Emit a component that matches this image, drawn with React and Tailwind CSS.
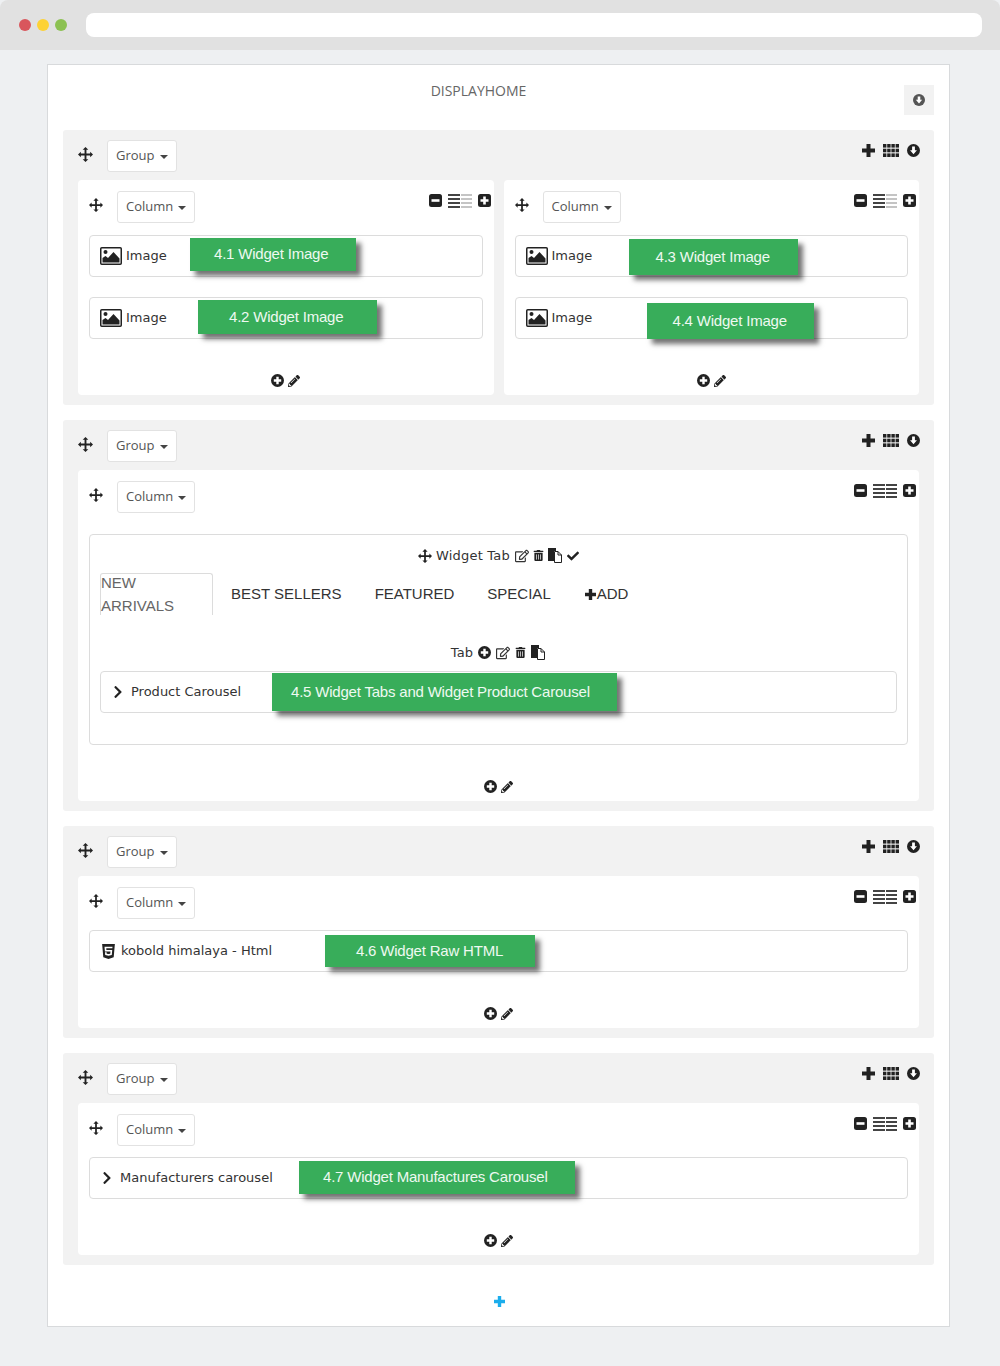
import React from "react";
import { FaPencilAlt, FaRegEdit, FaCheck, FaChevronRight, FaHtml5, FaTrashAlt } from "react-icons/fa";

const Move = ({ s = 16 }) => (
  <svg width={s} height={s} viewBox="0 0 16 16" fill="#222" className="shrink-0">
    <path d="M8 0 11 3H9V7H13V5L16 8 13 11V9H9V13H11L8 16 5 13H7V9H3V11L0 8 3 5V7H7V3H5Z" />
  </svg>
);
const Plus = ({ s = 13, c = "#222" }) => (
  <svg width={s} height={s} viewBox="0 0 13 13" fill={c} className="shrink-0">
    <path d="M4.5 0h4v4.5H13v4H8.5V13h-4V8.5H0v-4h4.500z" />
  </svg>
);
const Grid = () => (
  <svg width="16" height="13" viewBox="0 0 16 13" fill="#222" className="shrink-0">
    {[0, 4.7, 9.4].map((y) =>
      [0, 4.2, 8.4, 12.6].map((x) => <rect key={`${x}-${y}`} x={x} y={y} width="3.4" height="3.6" />)
    )}
  </svg>
);
const CircleDown = ({ s = 13, c = "#222" }) => (
  <svg width={s} height={s} viewBox="0 0 14 14" className="shrink-0">
    <circle cx="7" cy="7" r="7" fill={c} />
    <path d="M5.500 2.800h3v4h2.200L7 11 3.300 6.800h2.200z" fill="#fff" />
  </svg>
);
const SquareMinus = () => (
  <svg width="13" height="13" viewBox="0 0 13 13" className="shrink-0">
    <rect width="13" height="13" rx="2.500" fill="#222" />
    <rect x="2.500" y="5.200" width="8" height="2.600" fill="#fff" />
  </svg>
);
const SquarePlus = () => (
  <svg width="13" height="13" viewBox="0 0 13 13" className="shrink-0">
    <rect width="13" height="13" rx="2.500" fill="#222" />
    <path d="M5.200 2.500h2.600v2.700h2.700v2.600H7.800v2.700H5.200V7.800H2.500V5.200h2.700z" fill="#fff" />
  </svg>
);
const CirclePlus = () => (
  <svg width="13" height="13" viewBox="0 0 13 13" className="shrink-0">
    <circle cx="6.500" cy="6.500" r="6.500" fill="#222" />
    <path d="M5.300 2.800h2.400v2.500h2.500v2.400H7.700v2.500H5.300V7.700H2.800V5.300h2.500z" fill="#fff" />
  </svg>
);
const Copy = () => (
  <svg width="14" height="15" viewBox="0 0 14 15" className="shrink-0">
    <path d="M0 0h8v3H6v10H0z" fill="#222" />
    <path d="M6.500 3.500H10L13.500 7v7.500h-7z" fill="#fff" stroke="#222" />
    <path d="M10 3.500V7h3.500" fill="none" stroke="#222" />
  </svg>
);
const ImageIcon = () => (
  <svg width="22" height="18" viewBox="0 0 22 18" className="shrink-0">
    <rect x="0.750" y="0.750" width="20.500" height="16.500" rx="1" fill="#fff" stroke="#222" strokeWidth="1.500" />
    <circle cx="5.500" cy="5" r="2" fill="#222" />
    <path d="M2.500 15.500V11l3-2 2.500 2 5.500-6 6 6.500v4z" fill="#222" />
  </svg>
);
const Bars = ({ half }) => (
  <div className="flex gap-px">
    <div className="flex flex-col gap-[2px] w-[12px]">
      <div className="h-[2px] bg-[#444]" />
      <div className="h-[2px] bg-[#444]" />
      <div className="h-[2px] bg-[#444]" />
      <div className="h-[2px] bg-[#444]" />
    </div>
    <div className="flex flex-col gap-[2px] w-[11px]">
      <div className={half ? "h-[2px] bg-[#c4c4c4]" : "h-[2px] bg-[#444]"} />
      <div className={half ? "h-[2px] bg-[#c4c4c4]" : "h-[2px] bg-[#444]"} />
      <div className={half ? "h-[2px] bg-[#c4c4c4]" : "h-[2px] bg-[#444]"} />
      <div className={half ? "h-[2px] bg-[#c4c4c4]" : "h-[2px] bg-[#444]"} />
    </div>
  </div>
);

const Dropdown = ({ label }) => (
  <div className="flex items-center gap-[5px] h-[32px] px-[8px] bg-white border border-[#e2e2e2] rounded-[3px] text-[13px] text-[#555] shrink-0">
    <span>{label}</span>
    <span className="w-0 h-0 mt-[2px] border-x-[4px] border-x-transparent border-t-[4px] border-t-[#444]" />
  </div>
);

const Note = ({ className, children }) => (
  <div
    className={`absolute z-10 flex items-center bg-[#38ad5a] text-[#eef9f1] text-[15px] tracking-[-0.2px] font-['Liberation_Sans',sans-serif] shadow-[5px_5px_5px_rgba(0,0,0,0.55)] whitespace-nowrap ${className}`}
  >
    {children}
  </div>
);

const Row = ({ icon, text, children, className = "" }) => (
  <div className={`relative flex items-center h-[42px] bg-white border border-[#dcdcdc] rounded-[4px] text-[13px] text-[#333] font-['DejaVu_Sans',sans-serif] ${className}`}>
    {icon}
    <span>{text}</span>
    {children}
  </div>
);

const ColFoot = () => (
  <div className="flex items-center justify-center gap-[4px]">
    <CirclePlus />
    <FaPencilAlt size={12} color="#222" />
  </div>
);

const Column = ({ half, flex, headMb = "mb-[11px]", foot = "mt-[35px]", children }) => (
  <div className={`bg-white rounded-[4px] pt-[11px] px-[11px] pb-[8px] ${flex ? "flex-1 min-w-0" : ""}`}>
    <div className={`flex items-start ${headMb}`}>
      <div className="flex items-center h-[32px] w-[28px] -mt-[2px]"><Move s={14} /></div>
      <Dropdown label="Column" />
      <div className="ml-auto flex items-center gap-[6px] mt-[3px] -mr-[8px] h-[13px]">
        <SquareMinus />
        <Bars half={half} />
        <SquarePlus />
      </div>
    </div>
    {children}
    <div className={foot}><ColFoot /></div>
  </div>
);

const Group = ({ children }) => (
  <div className="bg-[#f2f2f2] rounded-[3px] px-[15px] pt-[10px] pb-[10px]">
    <div className="flex items-start mb-[8px] h-[32px]">
      <div className="flex items-center h-[32px] w-[29px] pl-0 -mt-[2px]"><Move s={15} /></div>
      <Dropdown label="Group" />
      <div className="ml-auto flex items-center gap-[8px] mt-[4px] -mr-[1px] h-[13px]">
        <Plus />
        <Grid />
        <CircleDown />
      </div>
    </div>
    {children}
  </div>
);

const Tab = ({ children, className = "" }) => (
  <span className={`font-['Liberation_Sans_Narrow','Liberation_Sans',sans-serif] text-[15px] text-[#333] ${className}`}>{children}</span>
);

export default function App() {
  return (
    <div className="min-h-[1366px] bg-[#eef0f2] font-['Open_Sans',sans-serif]">
      <div className="flex items-center h-[50px] bg-[#e1e1e1] rounded-t-[8px] pl-[19px] pr-[18px]">
        <div className="flex gap-[6px] mr-[19px]">
          <span className="w-[12px] h-[12px] rounded-full bg-[#d9565c]" />
          <span className="w-[12px] h-[12px] rounded-full bg-[#fdd235]" />
          <span className="w-[12px] h-[12px] rounded-full bg-[#8cc152]" />
        </div>
        <div className="flex-1 h-[24px] bg-white rounded-[8px]" />
      </div>

      <div className="ml-[47px] mt-[14px] w-[903px] h-[1263px] bg-white border border-[#d8dadc] px-[15px]">
        <div className="flex items-start h-[65px]">
          <div className="flex-1 text-center pt-[16px] pr-[10px] text-[14px] leading-[19px] text-[#666]">DISPLAYHOME</div>
          <div className="mt-[20px] w-[30px] h-[30px] bg-[#f2f2f2] flex items-center justify-center">
            <CircleDown s={12} c="#555" />
          </div>
        </div>

        <div className="flex flex-col gap-[15px]">
          <Group>
            <div className="flex gap-[10px]">
              <Column half flex headMb="mb-[12px]" foot="mt-[35px]">
                <div className="flex flex-col gap-[20px]">
                  <Row icon={<span className="ml-[10px] mr-[4px]"><ImageIcon /></span>} text="Image">
                    <Note className="left-[100px] top-[2px] w-[166px] h-[33px] pl-[24px]">4.1 Widget Image</Note>
                  </Row>
                  <Row icon={<span className="ml-[10px] mr-[4px]"><ImageIcon /></span>} text="Image">
                    <Note className="left-[108px] top-[2px] w-[179px] h-[34px] pl-[31px]">4.2 Widget Image</Note>
                  </Row>
                </div>
              </Column>
              <Column half flex headMb="mb-[12px]" foot="mt-[35px]">
                <div className="flex flex-col gap-[20px]">
                  <Row icon={<span className="ml-[10px] mr-[4px]"><ImageIcon /></span>} text="Image">
                    <Note className="left-[113px] top-[3px] w-[169px] h-[36px] pl-[27px]">4.3 Widget Image</Note>
                  </Row>
                  <Row icon={<span className="ml-[10px] mr-[4px]"><ImageIcon /></span>} text="Image">
                    <Note className="left-[131px] top-[5px] w-[167px] h-[36px] pl-[26px]">4.4 Widget Image</Note>
                  </Row>
                </div>
              </Column>
            </div>
          </Group>

          <Group>
            <Column headMb="mb-[21px]" foot="mt-[35px]">
              <div className="border border-[#dcdcdc] rounded-[4px] h-[211px] px-[10px] pt-[12px] text-[#333]">
                <div className="flex items-center justify-center gap-[4px] h-[17px] text-[13px] tracking-[0.2px] font-['DejaVu_Sans',sans-serif]">
                  <Move s={14} />
                  <span className="mr-[1px]">Widget Tab</span>
                  <FaRegEdit size={14} color="#333" />
                  <FaTrashAlt size={11} color="#222" />
                  <Copy />
                  <FaCheck size={12} color="#222" className="ml-[1px]" />
                </div>
                <div className="flex items-center h-[42px] mt-[9px]">
                  <div className="flex items-center h-[42px] w-[113px] justify-center border border-b-0 border-[#dcdcdc] rounded-t-[3px]">
                    <Tab className="text-[#666]">NEW ARRIVALS</Tab>
                  </div>
                  <Tab className="ml-[18px]">BEST SELLERS</Tab>
                  <Tab className="ml-[33px]">FEATURED</Tab>
                  <Tab className="ml-[33px]">SPECIAL</Tab>
                  <span className="ml-[34px] flex items-center gap-[1px]"><Plus s={11} /><Tab>ADD</Tab></span>
                </div>
                <div className="flex items-center justify-center gap-[5px] h-[17px] mt-[29px] text-[13px] tracking-[0.2px] font-['DejaVu_Sans',sans-serif] -mr-[-1px]">
                  <span>Tab</span>
                  <CirclePlus />
                  <FaRegEdit size={14} color="#333" />
                  <FaTrashAlt size={11} color="#222" />
                  <Copy />
                </div>
                <Row
                  className="mt-[10px]"
                  icon={<FaChevronRight size={14} color="#222" className="ml-[10px] mr-[6px]" />}
                  text="Product Carousel"
                >
                  <Note className="left-[171px] top-px w-[345px] h-[38px] pl-[19px]">4.5 Widget Tabs and Widget Product Carousel</Note>
                </Row>
              </div>
            </Column>
          </Group>

          <Group>
            <Column foot="mt-[35px]">
              <Row icon={<FaHtml5 size={17} color="#222" className="ml-[10px] mr-[4px]" />} text="kobold himalaya - Html">
                <Note className="left-[235px] top-[4px] w-[210px] h-[32px] pl-[31px]">4.6 Widget Raw HTML</Note>
              </Row>
            </Column>
          </Group>

          <Group>
            <Column foot="mt-[35px]">
              <Row icon={<FaChevronRight size={14} color="#222" className="ml-[10px] mr-[6px]" />} text="Manufacturers carousel">
                <Note className="left-[209px] top-[3px] w-[276px] h-[33px] pl-[24px]">4.7 Widget Manufactures Carousel</Note>
              </Row>
            </Column>
          </Group>
        </div>

        <div className="flex justify-center mt-[31px] pl-[2px]"><Plus s={11} c="#1badec" /></div>
      </div>
    </div>
  );
}
